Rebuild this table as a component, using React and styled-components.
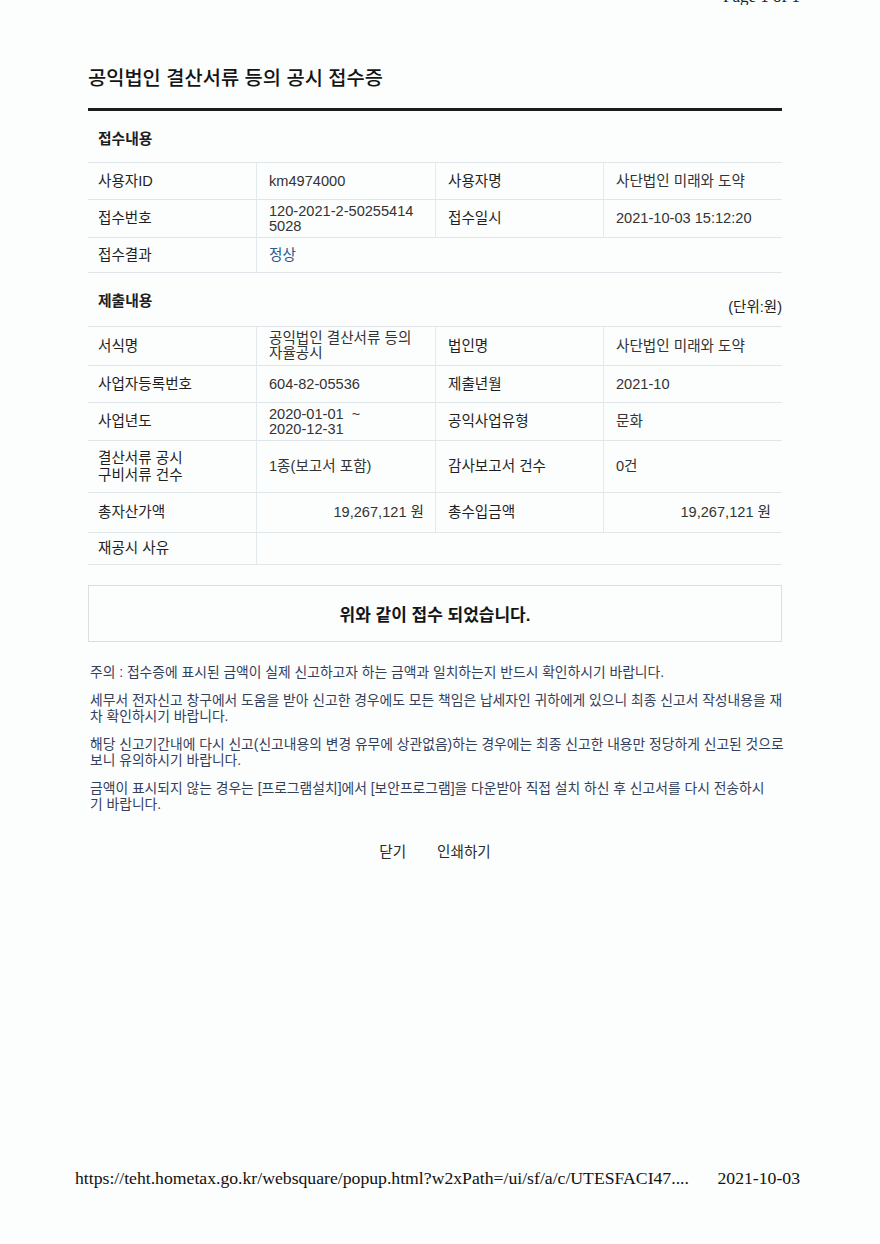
import React from 'react'
import styled, { createGlobalStyle } from 'styled-components'

const GlobalStyle = createGlobalStyle`
  html, body {
    margin: 0;
    padding: 0;
    background: #fcfdfd;
  }
  body {
    font-family: "Liberation Sans", "Noto Sans CJK KR", sans-serif;
    color: #222;
  }
`

const Page = styled.div`
  width: 880px;
  min-height: 1244px;
  display: flex;
  flex-direction: column;
  padding-bottom: 57px;
  box-sizing: border-box;
`

const PrintHeader = styled.div`
  height: 5px;
  overflow: hidden;
  display: flex;
  justify-content: flex-end;
  align-items: flex-end;
  padding-right: 80px;
  font-family: "Liberation Serif", serif;
  font-size: 17px;
  line-height: 17px;
  color: #222;
`

const Sheet = styled.div`
  width: 694px;
  margin-left: 88px;
  display: flex;
  flex-direction: column;
`

const Title = styled.h1`
  margin: 61px 0 0;
  padding-bottom: 18px;
  border-bottom: 3px solid #1c1c1c;
  font-size: 19.8px;
  font-weight: 500;
  line-height: 24px;
  color: #141414;
`

const SectionHead = styled.div`
  display: flex;
  justify-content: space-between;
  align-items: flex-end;
  height: ${p => p.$h || 18}px;
  margin: ${p => p.$top}px 0 ${p => p.$bottom}px;
  padding-left: 10px;
`

const SectionTitle = styled.span`
  align-self: flex-start;
  font-size: 14.8px;
  font-weight: 700;
  line-height: 18px;
  color: #1e1e1e;
`

const Unit = styled.span`
  font-size: 14.5px;
  line-height: 14px;
  color: #222;
`

const Table = styled.div`
  display: grid;
  grid-template-columns: 168px 179px 168px 179px;
  grid-template-rows: ${p => p.$rows};
  border-top: 1px solid #e0e6ea;
`

const Cell = styled.div`
  display: flex;
  align-items: center;
  justify-content: ${p => (p.$right ? 'flex-end' : 'flex-start')};
  grid-column: span ${p => p.$span || 1};
  padding: 0 11px 0 ${p => (p.$first ? 10 : 12)}px;
  border-bottom: 1px solid #e0e6ea;
  border-left: ${p => (p.$first ? 'none' : '1px solid #e3eaee')};
  font-size: 14.6px;
  line-height: 15px;
  color: ${p => p.$color || '#333'};
`

const Label = styled(Cell)`
  color: #1f1f1f;
  line-height: 17px;
`

const Done = styled.div`
  margin-top: 20px;
  height: 55px;
  border: 1px solid #d9dee3;
  display: flex;
  align-items: center;
  justify-content: center;
  font-size: 17px;
  font-weight: 700;
  color: #151515;
`

const Notes = styled.div`
  margin-top: 23px;
  padding-left: 2px;
  display: flex;
  flex-direction: column;
  gap: 12px;
`

const Note = styled.p`
  margin: 0;
  font-size: 13.8px;
  line-height: 16px;
  color: #34405a;
  white-space: nowrap;
`

const Actions = styled.div`
  margin-top: 31px;
  display: flex;
  justify-content: center;
  gap: 31px;
`

const ActionButton = styled.button`
  border: none;
  background: none;
  padding: 0;
  font-family: inherit;
  font-size: 14.6px;
  line-height: 16px;
  color: #2a2a2a;
  cursor: pointer;
`

const Footer = styled.div`
  margin: auto 80px 0 75px;
  display: flex;
  justify-content: space-between;
  font-family: "Liberation Serif", serif;
  font-size: 17.7px;
  line-height: 18px;
  color: #111;
`

function App() {
  return (
    <Page>
      <GlobalStyle />
      <PrintHeader>Page 1 of 1</PrintHeader>
      <Sheet>
        <Title>공익법인 결산서류 등의 공시 접수증</Title>

        <SectionHead $top={19} $bottom={14}>
          <SectionTitle>접수내용</SectionTitle>
        </SectionHead>
        <Table $rows="37px 38px 35px">
          <Label $first>사용자ID</Label>
          <Cell>km4974000</Cell>
          <Label>사용자명</Label>
          <Cell>사단법인 미래와 도약</Cell>

          <Label $first>접수번호</Label>
          <Cell>120-2021-2-50255414<br />5028</Cell>
          <Label>접수일시</Label>
          <Cell>2021-10-03 15:12:20</Cell>

          <Label $first>접수결과</Label>
          <Cell $span={3} $color="#2d5a91">정상</Cell>
        </Table>

        <SectionHead $h={22} $top={19} $bottom={12}>
          <SectionTitle>제출내용</SectionTitle>
          <Unit>(단위:원)</Unit>
        </SectionHead>
        <Table $rows="39px 37px 38px 52px 40px 32px">
          <Label $first>서식명</Label>
          <Cell>공익법인 결산서류 등의<br />자율공시</Cell>
          <Label>법인명</Label>
          <Cell>사단법인 미래와 도약</Cell>

          <Label $first>사업자등록번호</Label>
          <Cell>604-82-05536</Cell>
          <Label>제출년월</Label>
          <Cell>2021-10</Cell>

          <Label $first>사업년도</Label>
          <Cell>2020-01-01&nbsp;&nbsp;~<br />2020-12-31</Cell>
          <Label>공익사업유형</Label>
          <Cell>문화</Cell>

          <Label $first>결산서류 공시<br />구비서류 건수</Label>
          <Cell>1종(보고서 포함)</Cell>
          <Label>감사보고서 건수</Label>
          <Cell>0건</Cell>

          <Label $first>총자산가액</Label>
          <Cell $right>19,267,121 원</Cell>
          <Label>총수입금액</Label>
          <Cell $right>19,267,121 원</Cell>

          <Label $first>재공시 사유</Label>
          <Cell $span={3}></Cell>
        </Table>

        <Done>위와 같이 접수 되었습니다.</Done>

        <Notes>
          <Note>주의 : 접수증에 표시된 금액이 실제 신고하고자 하는 금액과 일치하는지 반드시 확인하시기 바랍니다.</Note>
          <Note>세무서 전자신고 창구에서 도움을 받아 신고한 경우에도 모든 책임은 납세자인 귀하에게 있으니 최종 신고서 작성내용을 재<br />차 확인하시기 바랍니다.</Note>
          <Note>해당 신고기간내에 다시 신고(신고내용의 변경 유무에 상관없음)하는 경우에는 최종 신고한 내용만 정당하게 신고된 것으로<br />보니 유의하시기 바랍니다.</Note>
          <Note>금액이 표시되지 않는 경우는 [프로그램설치]에서 [보안프로그램]을 다운받아 직접 설치 하신 후 신고서를 다시 전송하시<br />기 바랍니다.</Note>
        </Notes>

        <Actions>
          <ActionButton>닫기</ActionButton>
          <ActionButton>인쇄하기</ActionButton>
        </Actions>
      </Sheet>

      <Footer>
        <span>https://teht.hometax.go.kr/websquare/popup.html?w2xPath=/ui/sf/a/c/UTESFACI47....</span>
        <span>2021-10-03</span>
      </Footer>
    </Page>
  )
}

export default App
